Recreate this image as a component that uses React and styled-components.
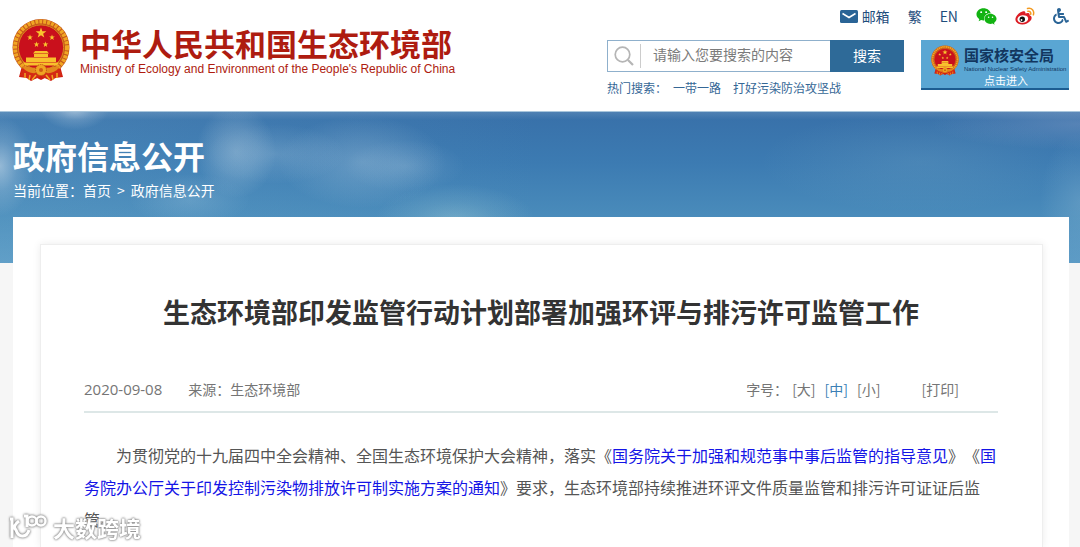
import React from "react";
import styled, { createGlobalStyle } from "styled-components";
import { FaWeixin, FaWheelchair } from "react-icons/fa";

const GlobalStyle = createGlobalStyle`
  *, *::before, *::after { box-sizing: border-box; }
  body {
    margin: 0;
    background: #f6f6f6;
    color: #555;
    font: 14px/20px "Noto Sans CJK SC", sans-serif;
    text-spacing-trim: space-all;
  }
  a { color: inherit; text-decoration: none; }
  h1, h2, p { margin: 0; }
  button, input { font: inherit; border-radius: 0; }
`;

const Header = styled.header`
  display: flex;
  justify-content: space-between;
  align-items: flex-start;
  height: 111px;
  padding: 0 11px 0 12px;
  background: #fff;
`;

const Brand = styled.a`
  display: flex;
  align-items: flex-start;
  gap: 10px;
  padding-top: 18px;
  color: #ae1c10;
`;

const BrandText = styled.div`
  display: flex;
  flex-direction: column;
  padding-top: 7px;
  white-space: nowrap;
`;

const BrandName = styled.span`
  font-size: 31px;
  line-height: 36px;
  font-weight: 700;
`;

const BrandEnglish = styled.span`
  font: 12px/16px "Liberation Sans", Arial, sans-serif;
`;

const Tools = styled.div`
  display: flex;
  flex-direction: column;
  width: 462px;
  flex: none;
`;

const TopLinks = styled.nav`
  display: flex;
  justify-content: flex-end;
  align-items: center;
  gap: 18px;
  height: 32px;
  margin-bottom: 8px;
  color: #1f4d7c;
`;

const TopLink = styled.a`
  display: flex;
  align-items: center;
  gap: 4px;
  line-height: 20px;
  color: ${(p) => p.$color || "inherit"};
`;

const ToolRow = styled.div`
  display: flex;
  justify-content: space-between;
  align-items: flex-start;
`;

const SearchArea = styled.div`
  width: 297px;
`;

const SearchForm = styled.form`
  display: flex;
  height: 32px;
`;

const SearchBox = styled.label`
  display: flex;
  align-items: center;
  flex: 1;
  min-width: 0;
  border: 1px solid #8fb0cc;
  border-right: 0;
  padding-left: 6px;
`;

const SearchInput = styled.input`
  flex: 1;
  min-width: 0;
  height: 24px;
  margin-left: 6px;
  padding: 0 0 4px 12px;
  border: 0;
  border-left: 1px solid #ccc;
  background: none;
  outline: none;
  color: #555;
  &::placeholder { color: #7b7b7b; opacity: 1; }
`;

const SearchButton = styled.button`
  width: 74px;
  border: 0;
  padding: 0 0 2px;
  background: #2e6a98;
  color: #fff;
`;

const HotSearch = styled.div`
  display: flex;
  gap: 12px;
  padding-top: 6px;
  font-size: 12px;
  line-height: 20px;
  color: #356796;
  white-space: nowrap;
`;

const HotLabel = styled.span`
  margin-right: -6px;
`;

const AgencyBanner = styled.a`
  display: grid;
  grid-template-columns: 28px 1fr;
  column-gap: 4px;
  width: 148px;
  height: 50px;
  padding: 5px 0 0 10px;
  background: #5aa6d3;
  border-bottom: 2px solid #1c5d92;
  color: #12365f;
  white-space: nowrap;
`;

const AgencyText = styled.div`
  display: flex;
  flex-direction: column;
  padding-left: 1px;
`;

const AgencyName = styled.span`
  font-size: 15px;
  line-height: 20px;
  font-weight: 700;
`;

const AgencyEnglish = styled.span`
  font: 6px/8px "Liberation Sans", Arial, sans-serif;
`;

const AgencyEnter = styled.span`
  padding-left: 20px;
  font-size: 11px;
  line-height: 14px;
  color: #fff;
`;

const Hero = styled.section`
  height: 152px;
  padding: 25px 13px 0;
  color: #fff;
  border-top: 1px solid #a9c6dc;
  background:
    linear-gradient(rgba(255, 255, 255, 0.12), transparent 8px),
    radial-gradient(34px 20px at 75px -2px, rgba(255, 255, 255, 0.4), rgba(255, 255, 255, 0.15) 50%, transparent),
    radial-gradient(34px 50px at 0 54px, rgba(255, 255, 255, 0.42), rgba(255, 255, 255, 0.15) 50%, transparent),
    radial-gradient(40px 46px at 236px 40px, rgba(200, 220, 232, 0.34), rgba(200, 220, 232, 0.2) 50%, transparent),
    radial-gradient(70px 30px at 275px 42px, rgba(200, 220, 232, 0.22), rgba(200, 220, 232, 0.1) 50%, transparent),
    radial-gradient(84px 46px at 362px 50px, rgba(200, 220, 232, 0.28), rgba(200, 220, 232, 0.14) 50%, transparent),
    radial-gradient(60px 26px at 405px 54px, rgba(200, 220, 232, 0.18), rgba(200, 220, 232, 0.08) 50%, transparent),
    radial-gradient(60px 26px at 190px 88px, rgba(190, 220, 235, 0.2), transparent),
    radial-gradient(80px 36px at 455px 108px, rgba(180, 220, 220, 0.34), rgba(180, 220, 220, 0.14) 50%, transparent),
    radial-gradient(150px 26px at 100% 12px, rgba(190, 190, 220, 0.22), transparent),
    radial-gradient(160px 50px at 920px 50px, rgba(160, 200, 210, 0.14), transparent),
    radial-gradient(40px 70px at 100% 90px, rgba(160, 200, 220, 0.25), transparent),
    linear-gradient(90deg, rgba(120, 180, 210, 0.2), transparent 50%),
    linear-gradient(#3870a9, #3c7bb2 34%, #4a8cbb 70%, #5b9ac5);
`;

const SectionTitle = styled.h2`
  font-size: 32px;
  line-height: 36px;
  font-weight: 700;
`;

const Breadcrumb = styled.nav`
  display: flex;
  gap: 6px;
  padding-top: 7px;
  line-height: 20px;
`;

const Panel = styled.main`
  position: relative;
  min-height: 330px;
  margin: -46px 11px 0 13px;
  padding: 27px 26px 0 27px;
  background: #fff;
`;

const Article = styled.article`
  min-height: 303px;
  padding: 48px 44px 0 43px;
  border: 1px solid #eee;
  border-bottom: 0;
  box-shadow: 0 0 8px rgba(0, 0, 0, 0.08);
`;

const ArticleTitle = styled.h1`
  font-size: 27px;
  line-height: 38px;
  font-weight: 700;
  text-align: center;
  color: #333;
`;

const Meta = styled.div`
  display: flex;
  align-items: center;
  margin-top: 48px;
  padding: 0 39px 12px 0;
  border-bottom: 2px solid #dde7e7;
  color: #757575;
  line-height: 20px;
`;

const PublishDate = styled.time`
  margin-right: 26px;
  font-size: 15px;
  font-family: "Open Sans", "Noto Sans", sans-serif;
`;

const Sizes = styled.div`
  display: flex;
  gap: 9px;
  margin-left: auto;
  margin-right: 41px;
`;

const SizesLabel = styled.span`
  margin-right: -5px;
`;

const MetaButton = styled.button`
  padding: 0;
  border: 0;
  background: none;
  color: ${(p) => (p.$active ? "#3c7fb5" : "inherit")};
`;

const Paragraph = styled.p`
  padding-top: 26px;
  font-size: 16px;
  line-height: 32px;
  text-indent: 2em;
  color: #555;
  a { color: #1414e6; }
`;

const Watermark = styled.div`
  position: fixed;
  left: 8px;
  bottom: 6px;
  display: flex;
  align-items: center;
  gap: 5px;
  font-size: 22px;
  line-height: 28px;
  font-weight: 700;
  color: #fff;
  text-shadow: 0 0 2px #888, 0 0 2px #999, 0 0 3px #aaa;
  svg { filter: drop-shadow(0 0 1px #888) drop-shadow(0 0 1px #aaa); }
`;

const starPoints = (cx, cy, r) =>
  Array.from({ length: 10 }, (_, i) => {
    const a = -Math.PI / 2 + (i * Math.PI) / 5;
    const d = i % 2 ? r * 0.4 : r;
    return `${cx + d * Math.cos(a)},${cy + d * Math.sin(a)}`;
  }).join(" ");

const Emblem = ({ width, height }) => (
  <svg width={width} height={height} viewBox="0 0 58 64" aria-hidden="true">
    <path d="M10 48 7 59l8 1 4 3 6-3 4 2 4-2 6 3 4-3 8-1-3-11z" fill="#cf1d12" />
    <ellipse cx="29" cy="29.5" rx="28.5" ry="28.5" fill="#c4551a" />
    <circle cx="29" cy="29.5" r="26" fill="none" stroke="#f0a624" strokeWidth="4" strokeDasharray="3 1" />
    <circle cx="29" cy="29.5" r="22.6" fill="#c9101c" stroke="#d98a1c" />
    <polygon points={starPoints(29, 15, 5.6)} fill="#f9c52e" />
    <polygon points={starPoints(18, 19.5, 3)} fill="#f9c52e" />
    <polygon points={starPoints(40, 19.5, 3)} fill="#f9c52e" />
    <polygon points={starPoints(24.5, 26.5, 3)} fill="#f9c52e" />
    <polygon points={starPoints(33.5, 26.5, 3)} fill="#f9c52e" />
    <path d="M21 35.5 23 33h12l2 2.500zM22 36h14v3H22zM14 39.500h30v4.500H14zM11 44.500h36l-2 3H13z" fill="#f8c02c" />
    <path d="M10 48q19 4 38 0l-5 7q-14 5-28 0z" fill="#e38a1d" />
    <path d="M11 50c5 5 11 7 18 3 7 4 13 2 18-3l3 7c-8 5-15 5-21 1-6 4-13 4-21-1z" fill="#d42a14" />
    <circle cx="29" cy="52" r="5.500" fill="#efa423" stroke="#b8450f" strokeDasharray="1 1" />
    <circle cx="29" cy="52" r="2" fill="#cf5a14" />
    <path d="M13 55v5M18 57l-1 5M24 57l-4 5M34 57l4 5M40 57l1 5M45 55v5" stroke="#f0a624" strokeWidth="1.500" />
  </svg>
);

const MailIcon = () => (
  <svg width="18" height="13" viewBox="0 0 18 13" aria-hidden="true">
    <rect width="18" height="13" rx="1.500" fill="#2a6496" />
    <path d="m2.500 3.500 6.500 4 6.500-4" fill="none" stroke="#fff" strokeWidth="1.500" />
  </svg>
);

const WeiboIcon = () => (
  <svg width="20" height="18" viewBox="0 0 20 18" aria-hidden="true">
    <path d="M7.500 4.500c2-.8 3.300 0 2.800 2.100 2.300-1 4.800-.8 4.300 1.600 2.500.9 2.600 3.500.8 5.600C13.300 16.300 10.400 17.500 7.200 17.400 3.400 17.300.4 15.300.4 12.200.4 9.200 4.200 5.500 7.500 4.500z" fill="#dc1c24" />
    <ellipse cx="7.800" cy="12" rx="5.400" ry="3.800" fill="#fff" transform="rotate(-8 7.800 12)" />
    <circle cx="7.300" cy="12.300" r="2.700" fill="#111" />
    <circle cx="6.500" cy="13" r=".9" fill="#fff" />
    <path d="M12.500 1.500c4.300-1 7.100 2.200 5.900 6.300M12.900 4.300c2.100-.4 3.300 1 2.800 2.900" fill="none" stroke="#f39a20" strokeWidth="1.500" strokeLinecap="round" />
  </svg>
);

const SearchIcon = () => (
  <svg width="20" height="20" viewBox="0 0 20 20" fill="none" stroke="#b5b5b5" aria-hidden="true">
    <circle cx="8.500" cy="8.500" r="7.300" strokeWidth="1.700" />
    <path d="m14 14 5 5" strokeWidth="2.200" />
  </svg>
);

const WatermarkLogo = () => (
  <svg width="40" height="26" viewBox="0 0 40 26" fill="none" stroke="#fff" strokeWidth="3" aria-hidden="true">
    <path d="M2 5h2v19M11 7c-4 3-6 6-3 9 3 9 11 7 13 0M16 2h3v11" />
    <circle cx="24" cy="7" r="4.500" strokeWidth="2.500" />
    <circle cx="33" cy="7" r="4.500" strokeWidth="2.500" />
  </svg>
);

export default function App() {
  return (
    <>
      <GlobalStyle />
      <Header>
        <Brand href="#">
          <Emblem width={58} height={64} />
          <BrandText>
            <BrandName>中华人民共和国生态环境部</BrandName>
            <BrandEnglish>Ministry of Ecology and Environment of the People's Republic of China</BrandEnglish>
          </BrandText>
        </Brand>
        <Tools>
          <TopLinks>
            <TopLink href="#"><MailIcon />邮箱</TopLink>
            <TopLink href="#">繁</TopLink>
            <TopLink href="#">EN</TopLink>
            <TopLink href="#" $color="#12b312" aria-label="微信"><FaWeixin size={21} /></TopLink>
            <TopLink href="#" aria-label="微博"><WeiboIcon /></TopLink>
            <TopLink href="#" $color="#2a6496" aria-label="无障碍"><FaWheelchair size={16} /></TopLink>
          </TopLinks>
          <ToolRow>
            <SearchArea>
              <SearchForm onSubmit={(e) => e.preventDefault()}>
                <SearchBox>
                  <SearchIcon />
                  <SearchInput type="text" aria-label="搜索" placeholder="请输入您要搜索的内容" />
                </SearchBox>
                <SearchButton type="submit">搜索</SearchButton>
              </SearchForm>
              <HotSearch>
                <HotLabel>热门搜索：</HotLabel>
                <a href="#">一带一路</a>
                <a href="#">打好污染防治攻坚战</a>
              </HotSearch>
            </SearchArea>
            <AgencyBanner href="#">
              <Emblem width={28} height={31} />
              <AgencyText>
                <AgencyName>国家核安全局</AgencyName>
                <AgencyEnglish>National Nuclear Safety Administration</AgencyEnglish>
                <AgencyEnter>点击进入</AgencyEnter>
              </AgencyText>
            </AgencyBanner>
          </ToolRow>
        </Tools>
      </Header>

      <Hero>
        <SectionTitle>政府信息公开</SectionTitle>
        <Breadcrumb>
          <span>当前位置：<a href="#">首页</a></span>
          <span>&gt;</span>
          <a href="#">政府信息公开</a>
        </Breadcrumb>
      </Hero>

      <Panel>
        <Article>
          <ArticleTitle>生态环境部印发监管行动计划部署加强环评与排污许可监管工作</ArticleTitle>
          <Meta>
            <PublishDate dateTime="2020-09-08">2020-09-08</PublishDate>
            <span>来源：生态环境部</span>
            <Sizes>
              <SizesLabel>字号：</SizesLabel>
              <MetaButton type="button">[大]</MetaButton>
              <MetaButton type="button" $active>[中]</MetaButton>
              <MetaButton type="button">[小]</MetaButton>
            </Sizes>
            <MetaButton type="button">[打印]</MetaButton>
          </Meta>
          <Paragraph>
            为贯彻党的十九届四中全会精神、全国生态环境保护大会精神，落实《<a href="#">国务院关于加强和规范事中事后监管的指导意见</a>》《<a href="#">国务院办公厅关于印发控制污染物排放许可制实施方案的通知</a>》要求，生态环境部持续推进环评文件质量监管和排污许可证证后监管。
          </Paragraph>
        </Article>
      </Panel>

      <Watermark>
        <WatermarkLogo />
        <span>大数跨境</span>
      </Watermark>
    </>
  );
}
